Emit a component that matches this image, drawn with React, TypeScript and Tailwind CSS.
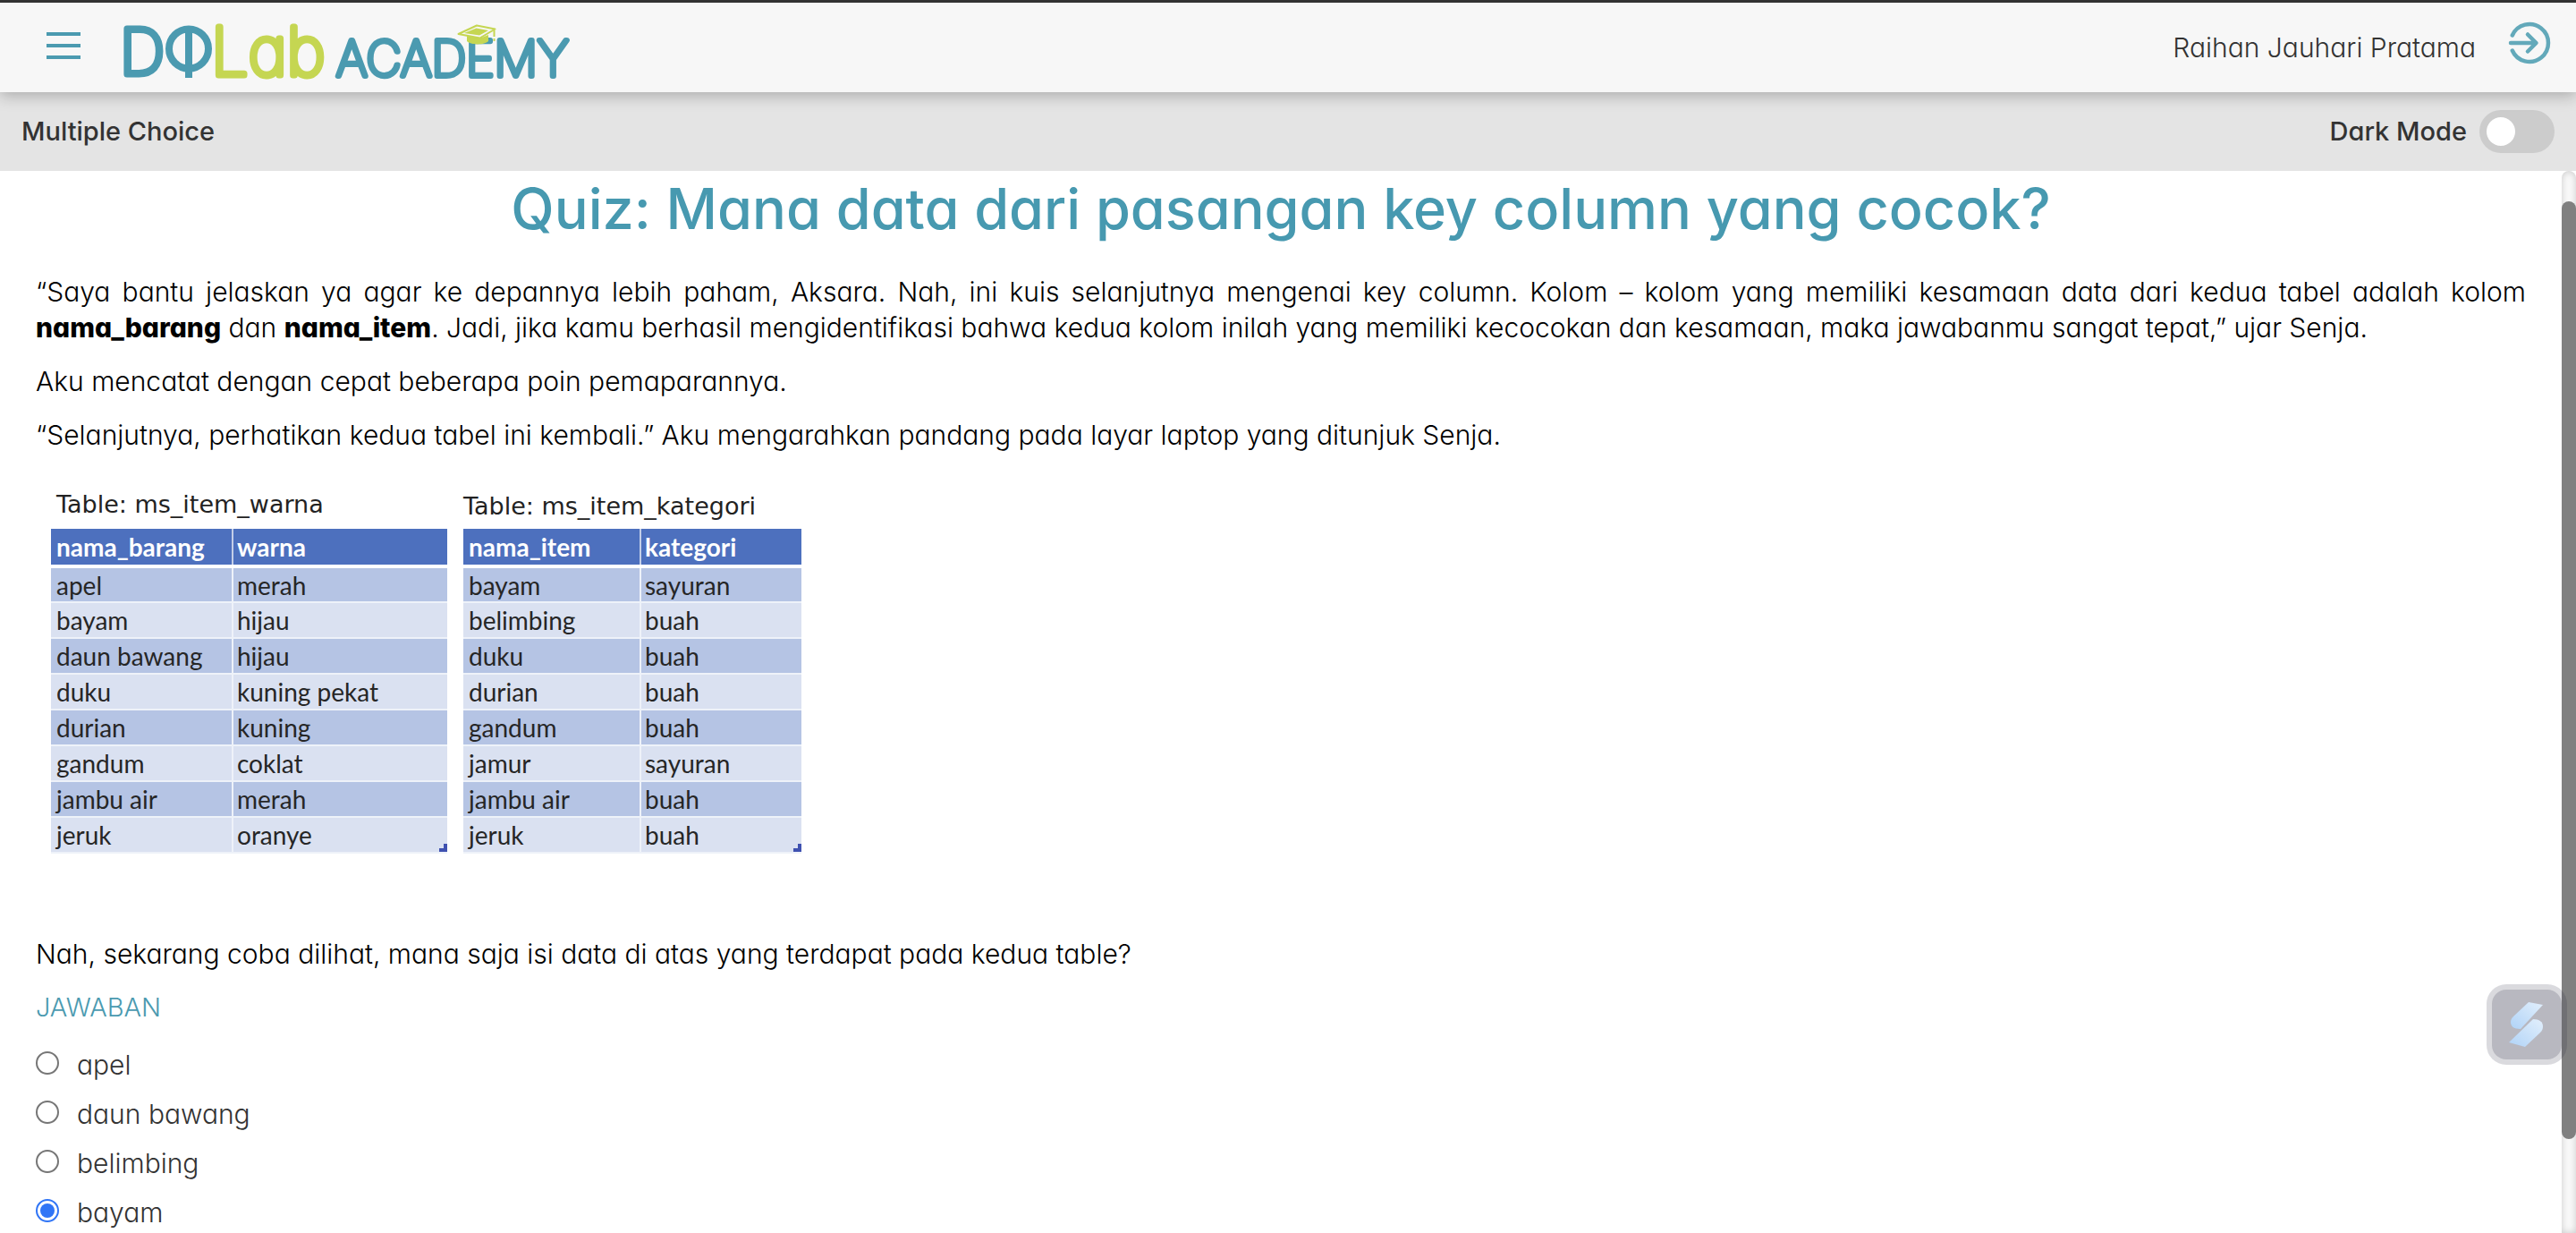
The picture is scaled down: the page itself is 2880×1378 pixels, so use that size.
import { useState } from "react";

type Row = [string, string];

const warnaRows: Row[] = [
  ["apel", "merah"],
  ["bayam", "hijau"],
  ["daun bawang", "hijau"],
  ["duku", "kuning pekat"],
  ["durian", "kuning"],
  ["gandum", "coklat"],
  ["jambu air", "merah"],
  ["jeruk", "oranye"],
];

const kategoriRows: Row[] = [
  ["bayam", "sayuran"],
  ["belimbing", "buah"],
  ["duku", "buah"],
  ["durian", "buah"],
  ["gandum", "buah"],
  ["jamur", "sayuran"],
  ["jambu air", "buah"],
  ["jeruk", "buah"],
];

const answers = ["apel", "daun bawang", "belimbing", "bayam"];

function Logo() {
  return (
    <svg
      viewBox="-8 0 528 100"
      className="h-[100px] w-[528px] font-['Inter'] [font-feature-settings:'cv11']"
      role="img"
      aria-label="DQLab Academy"
    >
      <g strokeWidth="7" strokeLinejoin="round" strokeLinecap="round" fontWeight="100">
        <text x="-4" y="80" fontSize="70" fill="#4b9ab0" stroke="#4b9ab0">
          D
        </text>
        <text x="98" y="81" fontSize="74" fill="#c5d652" stroke="#c5d652">
          Lab
        </text>
        <text x="238" y="82" fontSize="54" fill="#4b9ab0" stroke="#4b9ab0" strokeWidth="6">
          ACADEMY
        </text>
      </g>
      <g fill="none" stroke="#4b9ab0" strokeWidth="8">
        <circle cx="73" cy="51.500" r="22" />
        <path d="M73 28V84" />
      </g>
      <g>
        <path d="M384 37v6c4 4.500 20 4.500 24 0v-7l-10 4z" fill="#c5d652" />
        <path d="M374.500 35 395 25.500 415.500 29.500 398.500 39.500z" fill="#f7f7f7" stroke="#c5d652" strokeWidth="2" strokeLinejoin="round" />
        <path d="M381 34 394.500 28.500 408 31 398 36.500z" fill="#c5d652" />
        <path d="M414.500 31v7m0 2v3" stroke="#c5d652" strokeWidth="2" />
      </g>
    </svg>
  );
}

function DataTable({ name, heads, rows, cols }: { name: string; heads: Row; rows: Row[]; cols: string }) {
  return (
    <table aria-label={name} className="table-fixed border-collapse font-['Lato'] text-[28px] leading-9 text-[#262626]">
      <thead>
        <tr className="h-[42px] border-b-4 border-white bg-[#4d70be] text-left font-bold text-white">
          <th className={"border-r-2 border-[#c3cee8] px-1.5 py-0 " + cols}>{heads[0]}</th>
          <th className="px-1 py-0">{heads[1]}</th>
        </tr>
      </thead>
      <tbody>
        {rows.map(([a, b], i) => (
          <tr key={a} className="h-10 border-b-2 border-[#eef2f9] odd:bg-[#b5c4e4] even:bg-[#dae1f1]">
            <td className="border-r-2 border-[#eef2f9] px-1.5 py-0">{a}</td>
            <td className="relative px-1 py-0">
              {b}
              {i === rows.length - 1 && (
                <svg viewBox="0 0 9 9" className="absolute right-0 bottom-0 size-[9px]" aria-hidden="true">
                  <path d="M5 0h4v9H0V5h5z" fill="#3f51b0" />
                </svg>
              )}
            </td>
          </tr>
        ))}
      </tbody>
    </table>
  );
}

export default function App() {
  const [answer, setAnswer] = useState("bayam");
  const [dark, setDark] = useState(false);

  return (
    <div className="flex h-screen flex-col overflow-hidden bg-white font-['Inter',sans-serif] text-[30px] leading-10 font-[340] text-[#333] [font-feature-settings:'cv11']">
      <header className="relative z-10 flex shrink-0 items-center border-t-3 border-[#333] bg-[#f7f7f7] pr-7 pl-[52px] shadow-[0_4px_16px_rgba(0,0,0,0.25)]">
        <button type="button" aria-label="Menu" className="mb-1 flex w-[38px] flex-col gap-[9px]">
          <span className="h-1 bg-[#4b9ab0]" />
          <span className="h-1 bg-[#4b9ab0]" />
          <span className="h-1 bg-[#4b9ab0]" />
        </button>
        <a href="#" className="ml-10">
          <Logo />
        </a>
        <span className="ml-auto">Raihan Jauhari Pratama</span>
        <button type="button" aria-label="Keluar" className="mb-2.5 ml-9">
          <svg viewBox="0 0 48 48" className="size-12" fill="none" stroke="#63a9ba" strokeWidth="4.500" strokeLinecap="round" strokeLinejoin="round">
            <path d="M4.800 15.500a21 21 0 1 1 0 17" />
            <path d="M3 24h28M22 14.500 31.500 24 22 33.500" />
          </svg>
        </button>
      </header>

      <div className="flex h-[88px] shrink-0 items-center justify-between bg-[#e4e4e4] px-6 text-[29px] font-medium">
        <span>Multiple Choice</span>
        <label className="flex items-center gap-3.5">
          Dark Mode
          <input
            type="checkbox"
            role="switch"
            checked={dark}
            onChange={(e) => setDark(e.target.checked)}
            className="h-12 w-[84px] appearance-none rounded-full bg-[#ccc] p-2 before:block before:size-8 before:rounded-full before:bg-white checked:bg-[#4b9ab0] checked:before:ml-9"
          />
        </label>
      </div>

      <div className="flex min-h-0 grow">
        <main className="min-w-0 grow overflow-hidden px-10 text-black">
          <h1 className="pt-0.5 text-center text-[63px] leading-[80px] font-medium text-[#4799b0]">
            Quiz: Mana data dari pasangan key column yang cocok?
          </h1>
          <div className="mt-[33px] flex flex-col gap-5">
            <p className="text-justify">
              “Saya bantu jelaskan ya agar ke depannya lebih paham, Aksara. Nah, ini kuis selanjutnya mengenai key
              column. Kolom – kolom yang memiliki kesamaan data dari kedua tabel adalah kolom{" "}
              <b className="font-extrabold">nama_barang</b> dan <b className="font-extrabold">nama_item</b>. Jadi, jika
              kamu berhasil mengidentifikasi bahwa kedua kolom inilah yang memiliki kecocokan dan kesamaan, maka
              jawabanmu sangat tepat,” ujar Senja.
            </p>
            <p>Aku mencatat dengan cepat beberapa poin pemaparannya.</p>
            <p>“Selanjutnya, perhatikan kedua tabel ini kembali.” Aku mengarahkan pandang pada layar laptop yang ditunjuk Senja.</p>
          </div>

          <div className="mt-10 ml-[17px] grid w-[840px] grid-cols-[443px_378px] gap-x-[18px] gap-y-[7px] font-normal">
            <div className="pl-1.5 font-['DejaVu_Sans'] text-[27px] leading-9 text-[#222]">Table: ms_item_warna</div>
            <div className="pt-0.5 font-['DejaVu_Sans'] text-[27px] leading-9 text-[#222]">Table: ms_item_kategori</div>
            <DataTable name="ms_item_warna" heads={["nama_barang", "warna"]} rows={warnaRows} cols="w-[203px]" />
            <DataTable name="ms_item_kategori" heads={["nama_item", "kategori"]} rows={kategoriRows} cols="w-[198px]" />
          </div>

          <p className="mt-[92px]">Nah, sekarang coba dilihat, mana saja isi data di atas yang terdapat pada kedua table?</p>
          <fieldset className="mt-5 text-[#333]">
            <legend className="text-[29px] text-[#4b9ab0]">JAWABAN</legend>
            <div className="mt-6 flex flex-col gap-[15px]">
              {answers.map((a) => (
                <label key={a} className="flex items-center gap-5">
                  <input
                    type="radio"
                    name="jawaban"
                    checked={answer === a}
                    onChange={() => setAnswer(a)}
                    className="mb-1 size-[26px] appearance-none rounded-full border-2 border-[#767676] bg-white p-[3px] before:block before:size-4 before:rounded-full checked:border-[#3075f6] checked:before:bg-[#3075f6]"
                  />
                  {a}
                </label>
              ))}
            </div>
          </fieldset>
        </main>
        <div className="w-4 shrink-0 rounded-t-full bg-[#fafafa] pt-[34px] shadow-[inset_0_0_8px_rgba(0,0,0,0.2)]" aria-hidden="true">
          <div className="h-[1048px] rounded-full bg-[#808080]" />
        </div>
      </div>

      <button
        type="button"
        aria-label="Asisten"
        className="fixed right-2.5 bottom-[188px] size-[90px] rounded-[22px] bg-[#25253a]/17 p-1.5"
      >
        <span className="flex size-full items-center justify-center rounded-2xl bg-[#25253a]/19">
          <svg viewBox="0 0 40 52" className="h-[52px] w-10">
            <defs>
              <linearGradient id="ribbon" x1="1" y1="0" x2="0" y2="1">
                <stop offset="0" stopColor="#e2effc" />
                <stop offset="1" stopColor="#b0d3f7" />
              </linearGradient>
            </defs>
            <path d="M22 1 38 4 13 31C5 31 2 28 2 23c0-2 1-4 3-6z" fill="url(#ribbon)" />
            <path d="M0 46 27 20c7 0 11 3 11 8 0 3-1 5-3 7L18 51z" fill="url(#ribbon)" />
          </svg>
        </span>
      </button>
    </div>
  );
}
